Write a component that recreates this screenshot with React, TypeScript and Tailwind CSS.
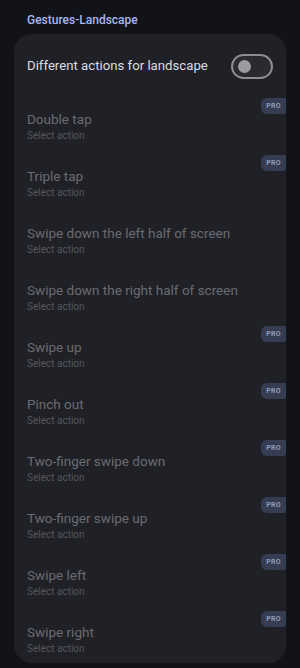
import React from "react";

const GESTURES = [
  { title: "Double tap", pro: true },
  { title: "Triple tap", pro: true },
  { title: "Swipe down the left half of screen", pro: false },
  { title: "Swipe down the right half of screen", pro: false },
  { title: "Swipe up", pro: true },
  { title: "Pinch out", pro: true },
  { title: "Two-finger swipe down", pro: true },
  { title: "Two-finger swipe up", pro: true },
  { title: "Swipe left", pro: true },
  { title: "Swipe right", pro: true },
];

export default function App() {
  return (
    <div
      className="w-[300px] h-[668px] overflow-hidden bg-[#121318] px-[14px]"
      style={{ fontFamily: "Roboto, 'Noto Sans', sans-serif" }}
    >
      {/* Section header */}
      <div className="pt-[12px] pb-[6px] pl-[13px] text-[12px] leading-[16px] font-medium text-[#a9b5ef]">
        Gestures-Landscape
      </div>

      <div className="rounded-[18px] bg-[#202127] overflow-hidden">
        {/* Landscape toggle */}
        <div className="h-[64px] flex items-center justify-between pl-[13px] pr-[13px]">
          <span className="text-[13.2px] font-normal text-[#dcdce1]">
            Different actions for landscape
          </span>
          <div className="w-[42px] h-[25px] rounded-full border-2 border-[#8d8d94] bg-[#2a2b31] flex items-center pl-[5px]">
            <div className="w-[13px] h-[13px] rounded-full bg-[#9b9ba2]" />
          </div>
        </div>

        {GESTURES.map((g) => (
          <div key={g.title} className="relative h-[57px] last:h-[52px] pl-[13px] pt-[13px]">
            {g.pro && (
              <span className="absolute right-0 top-0 w-[25px] h-[16px] rounded-l-[6px] rounded-br-[2px] bg-[#363d52] flex items-center justify-center text-[7px] font-bold tracking-[0.3px] text-[#8f9bbb]">
                PRO
              </span>
            )}
            <div className="text-[13.5px] leading-[16px] text-[#6a6b71]">{g.title}</div>
            <div className="mt-[2px] text-[10px] leading-[14px] text-[#55565c]">Select action</div>
          </div>
        ))}
      </div>
    </div>
  );
}
